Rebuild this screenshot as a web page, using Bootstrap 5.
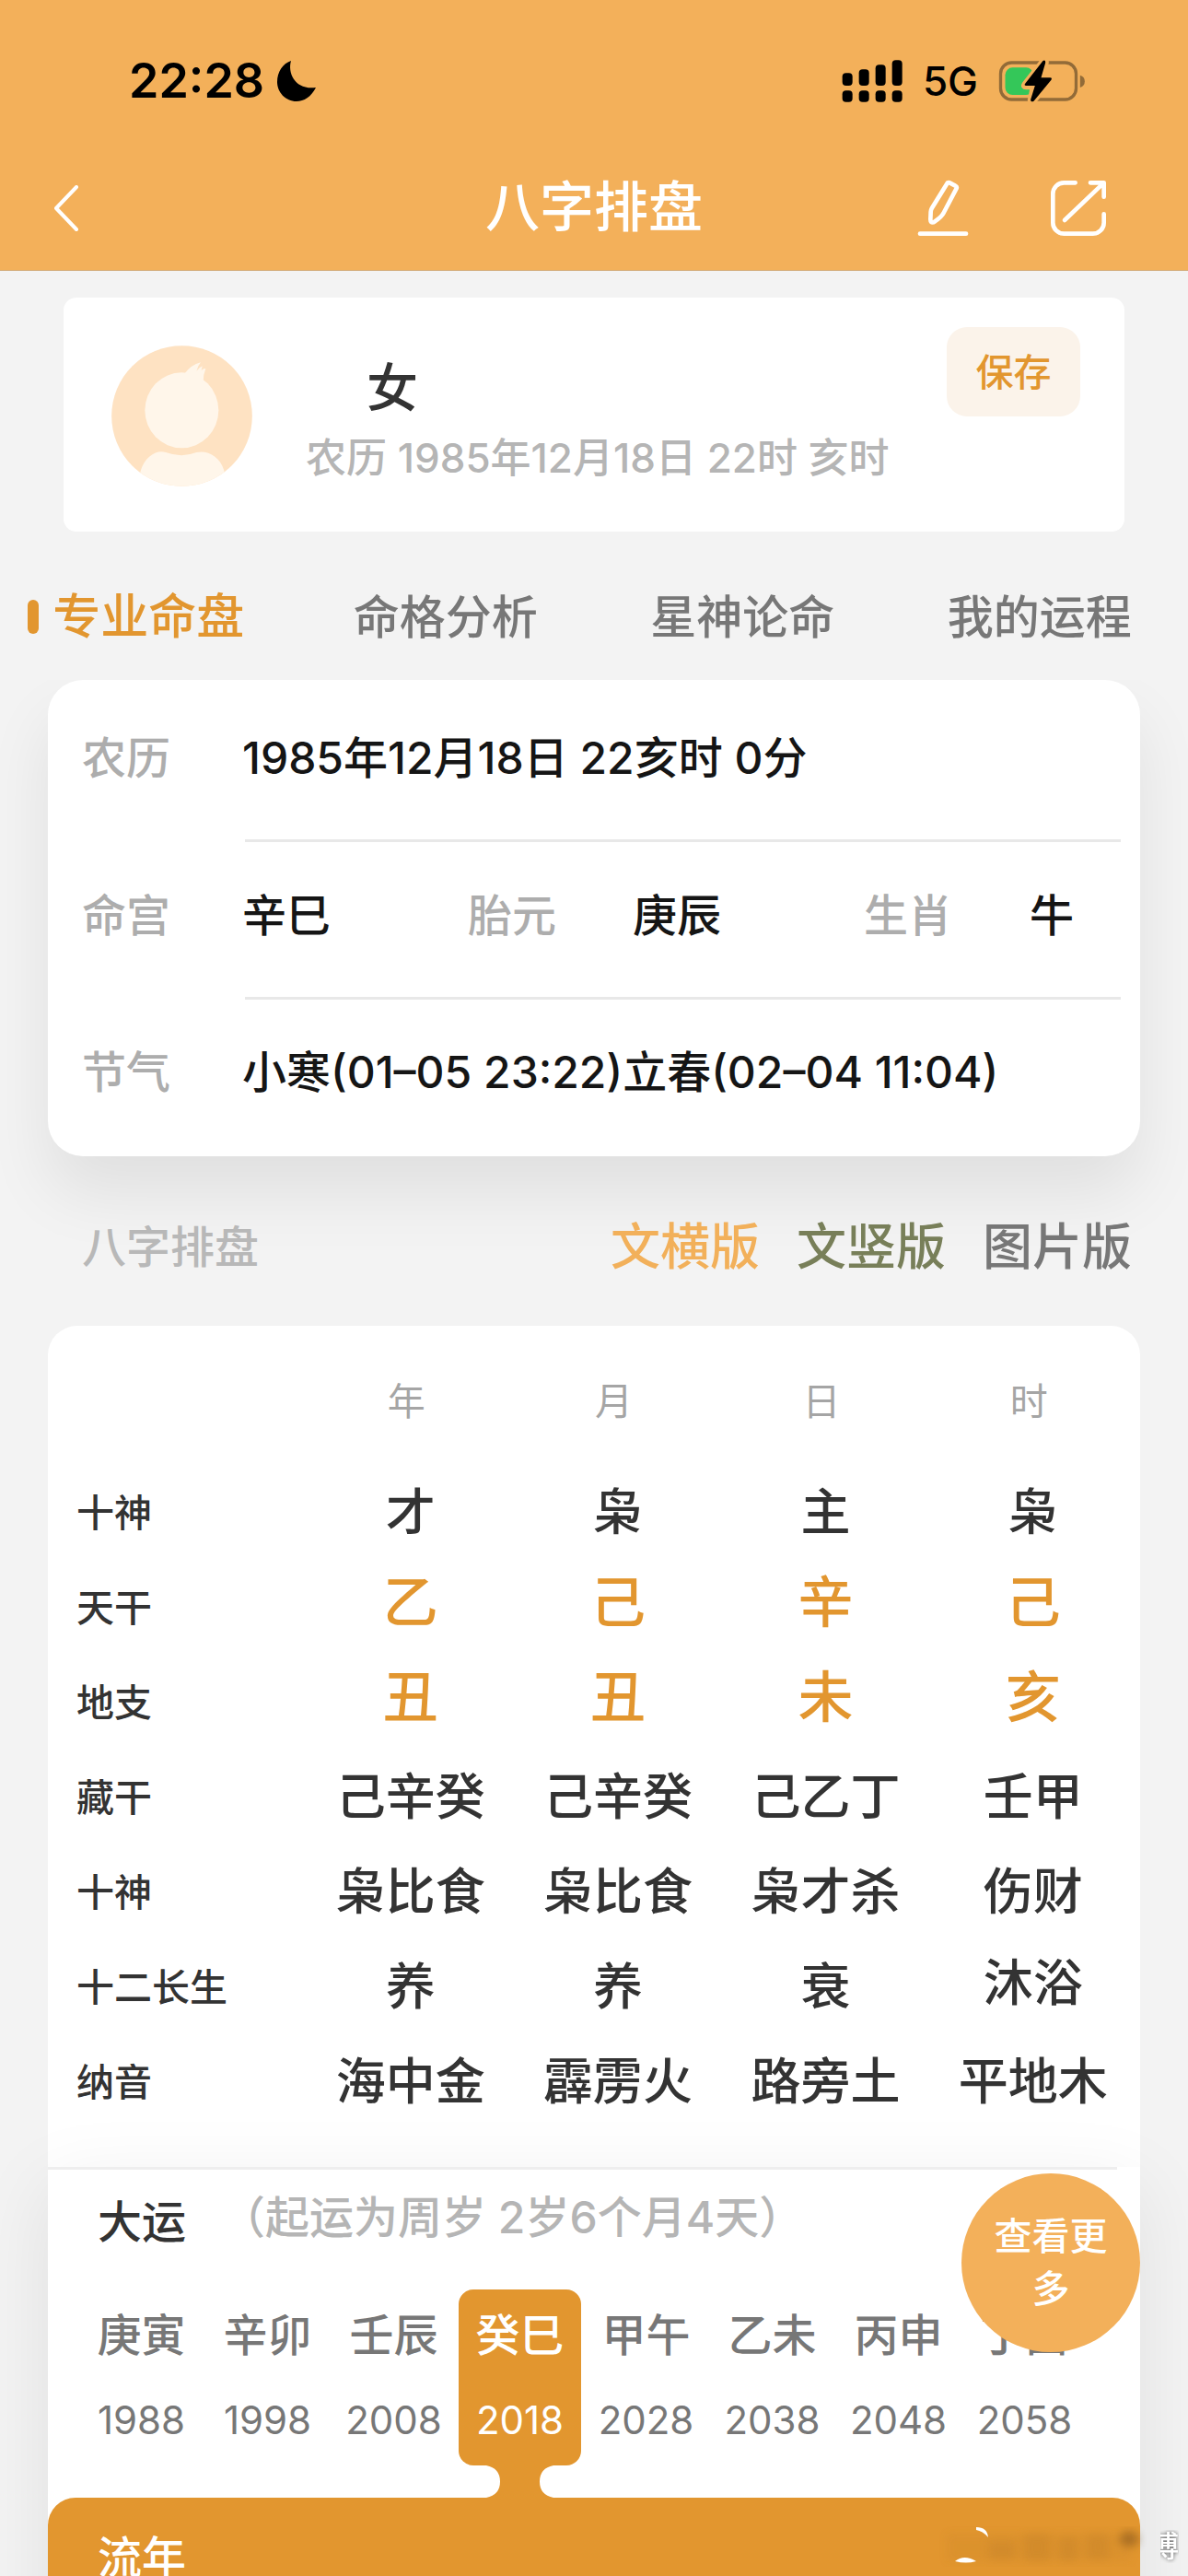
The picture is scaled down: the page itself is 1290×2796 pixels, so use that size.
<!DOCTYPE html>
<html lang="zh-CN">
<head>
<meta charset="utf-8">
<meta name="viewport" content="width=device-width, initial-scale=1">
<title>八字排盘</title>
<link href="https://cdn.jsdelivr.net/npm/bootstrap@5.3.0/dist/css/bootstrap.min.css" rel="stylesheet">
<style>
:root{--amber:#f3b05a;--amber-deep:#e2962f;--ink:#333;--muted:#aaa;--mid:#777}
body{background:#f3f3f3;color:var(--ink);font-family:Inter,"Noto Sans CJK SC",sans-serif;font-weight:500;font-size:48px;line-height:72px}
button,a{font:inherit;text-decoration:none}
svg{display:block;flex:none}
.app{height:100vh;overflow:hidden}
.topbar{background:var(--amber);border-bottom:1px solid #d3ab77}
.status{height:158px;padding:18px 111px 0 140px;color:#000}
.clock{font-size:52px;font-weight:600}
.moon{margin-left:14px}
.net{font-size:44px;margin:0 22px}
.nav-grid{display:grid;grid-template-columns:1fr auto 1fr;height:135px;padding:0 58px;color:#fff}
.nav-title{font-size:59px;font-weight:500}
.nav-tools{gap:88px;padding-right:30px}
.bare{background:none;border:0;padding:0;color:inherit}
.profile{margin:29px 69px 0;padding:0 48px 42px 52px;border-radius:14px;background:#fff}
.avatar{margin-top:52px}
.who{margin-left:58px;padding-top:60px;line-height:76px}
.who-name{font-size:56px;padding-left:66px}
.who-date{font-size:44px;color:#b5b5b5}
.save{margin-top:32px;width:145px;height:97px;border-radius:22px;background:#fbf3ea;color:var(--amber-deep);font-size:41px}
.tabs{height:161px;padding-top:24px;background:#f3f3f3;position:relative;z-index:1;font-size:50px}
.tabs a{color:var(--mid)}
.tabs a.on{color:var(--amber-deep);font-size:52px}
.tabs a.on::before{content:"";width:12px;height:37px;border-radius:6px;background:var(--amber-deep);margin:0 15px 0 -27px}
.panel{margin:0 52px;background:#fff}
.facts{border-radius:38px;padding:0 21px 0 37px;box-shadow:0 40px 70px rgba(0,0,0,.08);color:#151515}
.facts dl,.facts dt,.facts dd{margin:0;font-weight:inherit}
.facts dt{color:#adadad}
.fact{display:grid;grid-template-columns:174fr 954fr;padding:44px 0 52px}
.fact:first-child{padding-top:49px}
.fact:last-child{padding-top:43px;padding-bottom:55px}
.fact.six{grid-template-columns:174fr 245fr 179fr 251fr 180fr 99fr}
.rule{height:3px;margin-left:177px;background:#e8e8e8}
.sect{height:184px;padding:13px 61px 0 89px;position:relative}
.sect h2{font-size:48px;font-weight:500;color:#b8b8b8}
.views{gap:40px;font-size:54px}
.views a{color:var(--mid)}
.views .view-row{color:#f2b05a}
.views .view-col{color:#787f59}
.chart{border-radius:32px 32px 0 0;padding-bottom:41px}
.chart table{width:100%;table-layout:fixed}
.chart td{height:103px;padding:0 7px 0 0;text-align:center;font-size:54px}
.chart thead th{height:151px;padding:12px 16px 0 0;text-align:center;font-size:41px;font-weight:400;color:#a5a5a5}
.chart tbody th{padding:0 0 0 31px;font-size:41px;font-weight:500}
.chart .stem td{color:var(--amber-deep);font-size:60px;padding-bottom:12px}
.luck{position:relative;box-shadow:0 20px 80px rgba(0,0,0,.08)}
.luck-line{height:3px;margin-right:25px;background:#eee}
.luck-head{padding:21px 54px 0;gap:38px}
.luck-head p{color:#b5b5b5;font-size:48px;line-height:62px}
.decades{padding:37px 55px 0 35px}
.decade{flex:1 1 0;min-width:0;color:var(--mid);line-height:60px}
.decade-box{display:block;width:133px;padding:20px 0 19px;border-radius:16px;text-align:center}
.decade-box b{display:block;font-weight:500;margin-bottom:32px;white-space:nowrap}
.decade-box i{display:block;font-style:normal;font-weight:400;font-size:42px}
.decade.on{color:#fff}
.decade.on .decade-box{background:var(--amber-deep)}
.decade:not(.on){padding-bottom:35px}
.years{background:var(--amber-deep);border-radius:30px 30px 0 0;color:#fff;padding:29px 54px 60px}
.years h2,.luck h2{font-size:48px;font-weight:500;line-height:72px}
.more{position:absolute;right:0;top:7px;width:194px;height:194px;border-radius:50%;background:var(--amber);color:#fff;font-size:41px;line-height:57px;padding:0 34px}
.stamp{position:fixed;right:10px;bottom:14px;height:36px}
.stamp span{display:flex;justify-content:flex-end;width:20px;overflow:hidden;color:#fff;font-size:32px;line-height:36px;text-shadow:0 0 4px #555}
</style>
</head>
<body>
<div class="app">
<header class="topbar">
  <div class="status d-flex align-items-center justify-content-between">
    <div class="d-flex align-items-center">
      <span class="clock">22:28</span>
      <svg class="moon" width="42" height="44" viewBox="0 0 42 44"><path d="M15 0C11 14 20 32 42 29C37 39 29 44 21 44C9 44 0 34 0 23C0 12 6 3 15 0Z"/></svg>
    </div>
    <div class="d-flex align-items-center">
      <svg width="66" height="46" viewBox="76 70 198 138"><rect x="78" y="113" width="33" height="41" rx="12"/><rect x="132" y="101" width="33" height="53" rx="12"/><rect x="186" y="86" width="33" height="68" rx="12"/><rect x="240" y="71" width="33" height="83" rx="12"/><rect x="78" y="170" width="33" height="37" rx="12"/><rect x="132" y="170" width="33" height="37" rx="12"/><rect x="186" y="170" width="33" height="37" rx="12"/><rect x="240" y="170" width="33" height="37" rx="12"/></svg>
      <span class="net">5G</span>
      <svg width="95" height="46" viewBox="580 70 284 138"><rect x="587" y="79" width="246" height="120" rx="36" fill="none" stroke="#926b38" stroke-width="10"/><path d="M846 120q15 4 15 20t-15 20z" fill="#926b38"/><rect x="602" y="95" width="92" height="89" rx="24" fill="#34c759"/><path d="M727 72 666 150q-5 7 4 7H694L685 200q-1 8 8 5L752 134q4-7-4-7H722L734 78q0-9-7-6Z" stroke="#f3b05a" stroke-width="20" stroke-linejoin="round"/><path d="M725 73 667 147q-5 7 4 7H699L685 199q-1 11 10 5L752 135q4-7-4-7H719L733 80q1-12-8-7Z"/></svg>
    </div>
  </div>
  <nav class="nav-grid align-items-center">
    <button class="bare d-flex" aria-label="返回"><svg width="28" height="50" viewBox="0 0 28 50" fill="none" stroke="#fff" stroke-width="4" stroke-linecap="round" stroke-linejoin="round"><path d="M25 2 3 25 25 48"/></svg></button>
    <h1 class="nav-title m-0">八字排盘</h1>
    <div class="nav-tools d-flex justify-content-end">
      <button class="bare" aria-label="编辑"><svg width="56" height="62" viewBox="318 468 168 186" fill="none" stroke="#fff" stroke-width="14" stroke-linecap="round" stroke-linejoin="round"><path d="M417 478Q421 476 425 479L442 488Q448 491 446 496L404 576Q398 589 371 607Q361 609 361 598L362 573Q362 567 366 560Z"/><path d="M327 644H477"/></svg></button>
      <button class="bare" aria-label="分享"><svg width="62" height="62" viewBox="744 468 186 186" fill="none" stroke="#fff" stroke-width="14" stroke-linecap="round" stroke-linejoin="round"><path d="M827 478H790a36 36 0 0 0-36 36V608a36 36 0 0 0 36 36H884a36 36 0 0 0 36-36V580"/><path d="M876 478H920V524M792 600 916 482"/></svg></button>
    </div>
  </nav>
</header>

<main>
  <section class="profile d-flex align-items-start">
    <svg class="avatar" width="153" height="153" viewBox="63 75 459 459"><defs><clipPath id="disc"><circle cx="292.500" cy="304.500" r="229"/></clipPath></defs><circle cx="292.500" cy="304.500" r="229" fill="#fee2c2"/><g fill="#fff6ea" clip-path="url(#disc)"><ellipse cx="292" cy="286" rx="120" ry="123"/><path d="M300 168Q322 138 354 130Q345 140 340 158Q350 146 359 142L356 156Q366 147 370 151Q362 170 362 192L330 200Z"/><path d="M156 492C166 440 210 412 240 423Q292 442 340 423C380 414 424 442 432 492L430 560H156Z"/></g></svg>
    <div class="who">
      <div class="who-name">女</div>
      <div class="who-date">农历 1985年12月18日 22时 亥时</div>
    </div>
    <button class="save bare ms-auto">保存</button>
  </section>

  <nav class="tabs d-flex align-items-center">
    <a href="#" class="on col-3 d-flex align-items-center justify-content-center">专业命盘</a>
    <a href="#" class="col-3 text-center">命格分析</a>
    <a href="#" class="col-3 text-center">星神论命</a>
    <a href="#" class="col-3 text-center">我的运程</a>
  </nav>

  <section class="panel facts">
    <dl class="fact"><dt>农历</dt><dd>1985年12月18日 22亥时 0分</dd></dl>
    <div class="rule"></div>
    <dl class="fact six"><dt>命宫</dt><dd>辛巳</dd><dt>胎元</dt><dd>庚辰</dd><dt>生肖</dt><dd>牛</dd></dl>
    <div class="rule"></div>
    <dl class="fact"><dt>节气</dt><dd>小寒(01–05 23:22)立春(02–04 11:04)</dd></dl>
  </section>

  <div class="sect d-flex align-items-center justify-content-between">
    <h2 class="m-0">八字排盘</h2>
    <div class="views d-flex">
      <a href="#" class="view-row">文横版</a>
      <a href="#" class="view-col">文竖版</a>
      <a href="#">图片版</a>
    </div>
  </div>

  <section class="panel chart">
    <table>
      <colgroup><col style="width:24%"><col style="width:19%"><col style="width:19%"><col style="width:19%"><col style="width:19%"></colgroup>
      <thead><tr><th></th><th scope="col">年</th><th scope="col">月</th><th scope="col">日</th><th scope="col">时</th></tr></thead>
      <tbody>
        <tr><th scope="row">十神</th><td>才</td><td>枭</td><td>主</td><td>枭</td></tr>
        <tr class="stem"><th scope="row">天干</th><td>乙</td><td>己</td><td>辛</td><td>己</td></tr>
        <tr class="stem"><th scope="row">地支</th><td>丑</td><td>丑</td><td>未</td><td>亥</td></tr>
        <tr><th scope="row">藏干</th><td>己辛癸</td><td>己辛癸</td><td>己乙丁</td><td>壬甲</td></tr>
        <tr><th scope="row">十神</th><td>枭比食</td><td>枭比食</td><td>枭才杀</td><td>伤财</td></tr>
        <tr><th scope="row">十二长生</th><td>养</td><td>养</td><td>衰</td><td class="pb-2">沐浴</td></tr>
        <tr><th scope="row">纳音</th><td>海中金</td><td>霹雳火</td><td>路旁土</td><td>平地木</td></tr>
      </tbody>
    </table>
  </section>

  <section class="panel luck">
    <div class="luck-line"></div>
    <div class="luck-head d-flex align-items-start">
      <h2 class="m-0">大运</h2>
      <p class="m-0">（起运为周岁 2岁6个月4天）</p>
    </div>
    <div class="decades d-flex">
      <a href="#" class="decade"><span class="decade-box"><b>庚寅</b><i>1988</i></span></a>
      <a href="#" class="decade"><span class="decade-box"><b>辛卯</b><i>1998</i></span></a>
      <a href="#" class="decade"><span class="decade-box"><b>壬辰</b><i>2008</i></span></a>
      <a href="#" class="decade on"><span class="decade-box"><b>癸巳</b><i>2018</i></span><svg width="133" height="35" viewBox="0 0 133 35"><path d="M30 0Q45 3 45 17.500T30 35H103Q88 32 88 17.500T103 0Z" fill="#e2962f"/></svg></a>
      <a href="#" class="decade"><span class="decade-box"><b>甲午</b><i>2028</i></span></a>
      <a href="#" class="decade"><span class="decade-box"><b>乙未</b><i>2038</i></span></a>
      <a href="#" class="decade"><span class="decade-box"><b>丙申</b><i>2048</i></span></a>
      <a href="#" class="decade"><span class="decade-box"><b>丁酉</b><i>2058</i></span></a>
    </div>
    <div class="years"><h2 class="m-0">流年</h2></div>
    <button class="more bare">查看更多</button>
  </section>
</main>

<div class="stamp d-flex align-items-center">
  <svg width="240" height="44" viewBox="0 0 240 44"><defs><filter id="soft" x="-30%" y="-60%" width="160%" height="220%"><feGaussianBlur stdDeviation="5"/></filter></defs><g filter="url(#soft)" fill="#c07f28" opacity=".45"><rect x="8" y="8" width="200" height="30" opacity=".4"/><rect x="54" y="16" width="28" height="20"/><rect x="92" y="8" width="28" height="30"/><rect x="130" y="12" width="20" height="26"/><rect x="160" y="8" width="24" height="28"/><ellipse cx="206" cy="14" rx="11" ry="9" fill="#6d4515"/></g><path d="M40 1q12 0 13 11q-6-7-13-8zM17 38q10-8 23 0q-11 3-23 0z" fill="#fff"/></svg>
  <span>博</span>
</div>
</div>
<script src="https://cdn.jsdelivr.net/npm/bootstrap@5.3.0/dist/js/bootstrap.bundle.min.js"></script>
</body>
</html>
